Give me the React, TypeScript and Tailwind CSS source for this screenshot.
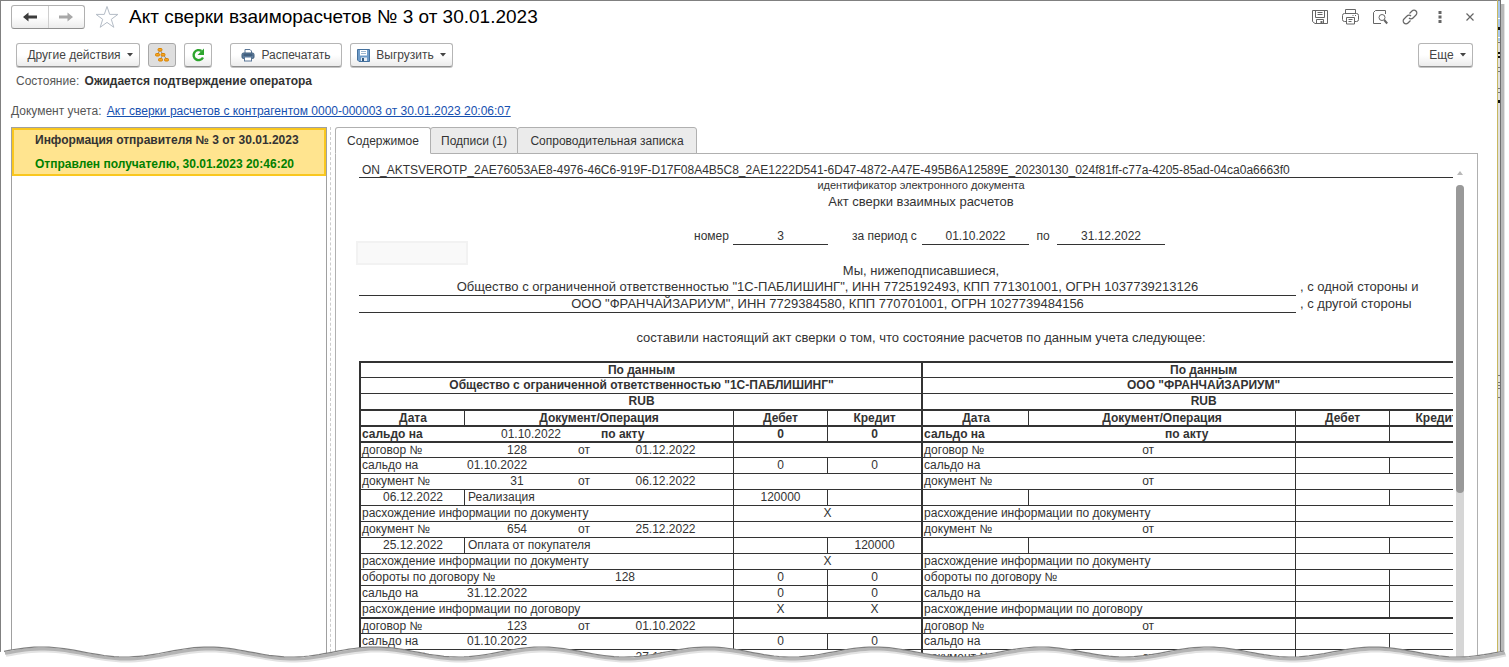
import React from 'react';
import { clsx } from 'clsx';

type Cell = {
  text?: string;
  span?: number;
  align?: 'left' | 'center';
  bold?: boolean;
  line?: boolean; // vertical rule on the left
};

type RowData = { thick?: boolean; left: Cell[]; right: Cell[] };

const DIVIDED: Cell[] = [
  { line: true, align: 'center' },
  { line: true, align: 'center' },
];
const MERGED: Cell[] = [{ span: 2, line: true, align: 'center' }];

const amounts = (debit: string, credit: string, bold = false): Cell[] => [
  { text: debit, line: true, align: 'center', bold },
  { text: credit, line: true, align: 'center', bold },
];

const reference = (label: string, num = '', date = ''): Cell[] => [
  { text: label },
  { text: num, span: 2, align: 'center' },
  { text: 'от', align: 'center' },
  { text: date, align: 'center' },
];

const balance = (date = ''): Cell[] => [{ text: 'сальдо на' }, { text: date, span: 4 }];

const operation = (date = '', name = ''): Cell[] => [
  { text: date, align: 'center' },
  { text: name, span: 4, line: true },
];

const headings = (): Cell[] => [
  { text: 'Дата', align: 'center', bold: true },
  { text: 'Документ/Операция', span: 4, align: 'center', bold: true, line: true },
  { text: 'Дебет', align: 'center', bold: true, line: true },
  { text: 'Кредит', align: 'center', bold: true, line: true },
];

const opening = (date = ''): Cell[] => [
  { text: 'сальдо на', bold: true },
  { text: date, span: 3, align: 'center' },
  { text: 'по акту', bold: true },
];

const wide = (text: string): Cell[] => [{ text, span: 7, align: 'center', bold: true }];
const note = (text: string): Cell[] => [{ text, span: 5 }];

const DOC_DIFF = 'расхождение информации по документу';
const CONTRACT_DIFF = 'расхождение информации по договору';
const MERGED_X: Cell[] = [{ text: 'X', span: 2, line: true, align: 'center' }];

const rows: RowData[] = [
  { thick: true, left: wide('По данным'), right: wide('По данным') },
  {
    left: wide('Общество с ограниченной ответственностью "1С-ПАБЛИШИНГ"'),
    right: wide('ООО "ФРАНЧАЙЗАРИУМ"'),
  },
  { left: wide('RUB'), right: wide('RUB') },
  { thick: true, left: headings(), right: headings() },
  {
    thick: true,
    left: [...opening('01.10.2022'), ...amounts('0', '0', true)],
    right: [...opening(), ...DIVIDED],
  },
  {
    thick: true,
    left: [...reference('договор №', '128', '01.12.2022'), ...MERGED],
    right: [...reference('договор №'), ...MERGED],
  },
  { left: [...balance('01.10.2022'), ...amounts('0', '0')], right: [...balance(), ...DIVIDED] },
  {
    left: [...reference('документ №', '31', '06.12.2022'), ...MERGED],
    right: [...reference('документ №'), ...MERGED],
  },
  {
    left: [...operation('06.12.2022', 'Реализация'), ...amounts('120000', '')],
    right: [...operation(), ...DIVIDED],
  },
  { left: [...note(DOC_DIFF), ...MERGED_X], right: [...note(DOC_DIFF), ...MERGED] },
  {
    left: [...reference('документ №', '654', '25.12.2022'), ...MERGED],
    right: [...reference('документ №'), ...MERGED],
  },
  {
    left: [...operation('25.12.2022', 'Оплата от покупателя'), ...amounts('', '120000')],
    right: [...operation(), ...DIVIDED],
  },
  { left: [...note(DOC_DIFF), ...MERGED_X], right: [...note(DOC_DIFF), ...MERGED] },
  {
    left: [
      { text: 'обороты по договору №', span: 2 },
      { text: '128', span: 3, align: 'center' },
      ...amounts('0', '0'),
    ],
    right: [...note('обороты по договору №'), ...DIVIDED],
  },
  { left: [...balance('31.12.2022'), ...amounts('0', '0')], right: [...balance(), ...DIVIDED] },
  {
    left: [...note(CONTRACT_DIFF), ...amounts('X', 'X')],
    right: [...note(CONTRACT_DIFF), ...DIVIDED],
  },
  {
    thick: true,
    left: [...reference('договор №', '123', '01.10.2022'), ...MERGED],
    right: [...reference('договор №'), ...MERGED],
  },
  { left: [...balance('01.10.2022'), ...amounts('0', '0')], right: [...balance(), ...DIVIDED] },
  {
    left: [...reference('документ №', '', '27.12.2022'), ...MERGED],
    right: [...reference('документ №'), ...MERGED],
  },
];

const BUTTON =
  'flex h-6 items-center justify-center rounded-[3px] border border-[#b5b5b5] border-b-[#8f8f8f] bg-linear-to-b from-white from-50% to-[#ececec] text-[#444] shadow-[0_1px_0_#c4c4c4]';

const Caret: React.FC = () => (
  <svg width="6" height="4" viewBox="0 0 6 4" aria-hidden="true">
    <path d="M0 0h6L3 3.5z" fill="#444" />
  </svg>
);

const Arrow: React.FC<{ color: string; flip?: boolean }> = ({ color, flip }) => (
  <svg width="16" height="12" viewBox="0 0 16 12" className={clsx(flip && 'rotate-180')} aria-hidden="true">
    <path d="M1 6 6.500 1.500v3H15v3H6.500v3z" fill={color} />
  </svg>
);

const Star: React.FC = () => (
  <svg width="24" height="24" viewBox="0 0 24 24" aria-hidden="true">
    <path
      d="m12 1.5 2.7 7.9h8.2l-6.6 4.9 2.5 8-6.8-4.9-6.8 4.9 2.5-8-6.6-4.9h8.2z"
      fill="#fff"
      stroke="#b4bcc6"
    />
  </svg>
);

const TreeIcon: React.FC = () => (
  <svg width="16" height="16" viewBox="0 0 16 16" aria-hidden="true">
    <path d="M6 3 3.5 7.5M6 3l3 4.500M9 7.500 6.500 12M9 7.500l3.500 4.500" stroke="#8b8b8b" fill="none" />
    <g fill="#f5a623" stroke="#d98200">
      <rect x="4" y="1.500" width="4" height="2.500" rx="1" />
      <rect x="1.500" y="6.500" width="4" height="2.500" rx="1" />
      <rect x="7" y="6.500" width="4" height="2.500" rx="1" />
      <rect x="4.500" y="11.500" width="4" height="2.500" rx="1" />
      <rect x="10.500" y="11.500" width="4" height="2.500" rx="1" />
    </g>
  </svg>
);

const RefreshIcon: React.FC = () => (
  <svg width="16" height="16" viewBox="0 0 16 16" aria-hidden="true">
    <path d="M11.500 4A5 5 0 1 0 13 10.500" fill="none" stroke="#2da52d" strokeWidth="2.400" />
    <path d="M14 1.500V8H7.500z" fill="#2da52d" />
  </svg>
);

const PrinterIcon: React.FC = () => (
  <svg width="14" height="14" viewBox="0 0 14 14" aria-hidden="true">
    <path d="M4 5V1.500h5L10.500 3v2" fill="#fff" stroke="#5b7797" />
    <rect x="1" y="5" width="12" height="5.500" rx="1.500" fill="#5f7f9f" stroke="#3f5c7b" />
    <path d="M2.500 7h9" stroke="#26405c" />
    <rect x="3.500" y="9" width="7" height="4" fill="#fff" stroke="#5b7797" />
  </svg>
);

const DisketteIcon: React.FC = () => (
  <svg width="13" height="13" viewBox="0 0 13 13" aria-hidden="true">
    <path d="M.5.5h12v12H2L.5 11z" fill="#6f9cc9" stroke="#44719e" />
    <path d="M3 1h7v5.500H3z" fill="#fff" />
    <path d="M4 2.500h5M4 4.500h5" stroke="#9bb5ce" />
    <path d="M4 8.500h6V12H4z" fill="#e8eef5" />
    <path d="M5 9h2v3H5z" fill="#33597f" />
  </svg>
);

const SaveIcon: React.FC = () => (
  <svg width="16" height="16" viewBox="0 0 16 16" fill="none" stroke="#666" aria-hidden="true">
    <path d="M.5 1.500h15v13H3l-2.500-2zM3.500 1.500v7h9v-7M5.500 3.500h5M5.500 5.500h5M4.500 14.500v-4h7v4" />
    <path d="M8.500 12h2v2h-2z" fill="#666" stroke="none" />
  </svg>
);

const PrintIcon: React.FC = () => (
  <svg width="17" height="16" viewBox="0 0 17 16" fill="none" stroke="#666" aria-hidden="true">
    <path d="M3.500 4.500v-4h10v4M4.500 12.500h-2a2 2 0 0 1-2-2v-4a2 2 0 0 1 2-2h12a2 2 0 0 1 2 2v4a2 2 0 0 1-2 2h-2" />
    <path d="M4.500 8.500h8v6.500h-8zM6.500 10.500h4M6.500 12.500h3M10.500 6.500h1M13 6.500h1" />
  </svg>
);

const PreviewIcon: React.FC = () => (
  <svg width="16" height="16" viewBox="0 0 16 16" fill="none" stroke="#666" aria-hidden="true">
    <path d="M13.500 5V1.500h-10l-2 2v11H9" />
    <circle cx="10" cy="8.500" r="3" />
    <path d="m12.200 11 3 3.500" strokeWidth="2" />
  </svg>
);

const LinkIcon: React.FC = () => (
  <svg width="16" height="16" viewBox="0 0 16 16" fill="none" stroke="#666" strokeWidth="1.200" aria-hidden="true">
    <path d="M7.500 4.500 10 2a2.600 2.600 0 0 1 4 4l-3 3a2.600 2.600 0 0 1-4 0" />
    <path d="M8.500 11.500 6 14a2.600 2.600 0 0 1-4-4l3-3a2.600 2.600 0 0 1 4 0" />
  </svg>
);

const DotsIcon: React.FC = () => (
  <svg width="4" height="12" viewBox="0 0 4 12" fill="#666" aria-hidden="true">
    <path d="M.5 0h3v3h-3zM.5 4.500h3v3h-3zM.5 9h3v3h-3z" />
  </svg>
);

const CloseIcon: React.FC = () => (
  <svg width="8" height="8" viewBox="0 0 8 8" stroke="#666" strokeWidth="1.200" aria-hidden="true">
    <path d="m.5.5 7 7M7.500.5l-7 7" />
  </svg>
);

const TitleBar: React.FC = () => (
  <header className="flex h-8 items-center pr-3 pl-2.5">
    <div className="flex h-6 w-[74px] overflow-hidden rounded-[3px] border border-[#b0b0b0] border-b-[#8f8f8f] bg-linear-to-b from-white from-50% to-[#ececec]">
      <button type="button" aria-label="Назад" className="flex flex-1 items-center justify-center border-r border-[#cfcfcf]">
        <Arrow color="#3c3c3c" />
      </button>
      <button type="button" aria-label="Вперед" className="flex flex-1 items-center justify-center">
        <Arrow color="#a8a8a8" flip />
      </button>
    </div>
    <button type="button" aria-label="В избранное" className="ml-2.5">
      <Star />
    </button>
    <h1 className="ml-2.5 text-[19px] whitespace-nowrap text-black">Акт сверки взаиморасчетов № 3 от 30.01.2023</h1>
    <div className="ml-auto flex items-center">
      <button type="button" aria-label="Сохранить" className="flex w-[30px] justify-center"><SaveIcon /></button>
      <button type="button" aria-label="Печать" className="flex w-[30px] justify-center"><PrintIcon /></button>
      <button type="button" aria-label="Просмотр" className="flex w-[30px] justify-center"><PreviewIcon /></button>
      <button type="button" aria-label="Получить ссылку" className="flex w-[30px] justify-center"><LinkIcon /></button>
      <button type="button" aria-label="Дополнительно" className="flex w-[30px] justify-center"><DotsIcon /></button>
      <button type="button" aria-label="Закрыть" className="flex w-[30px] justify-center"><CloseIcon /></button>
    </div>
  </header>
);

const Toolbar: React.FC = () => (
  <div className="mt-2.5 flex items-center pr-6 pl-[15px]">
    <button type="button" className={clsx(BUTTON, 'w-[124px] gap-1.5 pl-1')}>
      Другие действия <Caret />
    </button>
    <button
      type="button"
      aria-label="Структура"
      className="ml-2 flex h-6 w-7 items-center justify-center rounded-[3px] border border-[#a8a8a8] bg-[#dedede]"
    >
      <TreeIcon />
    </button>
    <button type="button" aria-label="Обновить" className={clsx(BUTTON, 'ml-2 w-7')}>
      <RefreshIcon />
    </button>
    <button type="button" className={clsx(BUTTON, 'ml-[18px] w-28 gap-1.5')}>
      <PrinterIcon /> Распечатать
    </button>
    <button type="button" className={clsx(BUTTON, 'ml-2 w-[103px] gap-1.5')}>
      <DisketteIcon /> Выгрузить <Caret />
    </button>
    <button type="button" className={clsx(BUTTON, 'ml-auto w-[55px] gap-1.5 pl-1')}>
      Еще <Caret />
    </button>
  </div>
);

const tabs = [
  { title: 'Содержимое', width: 'w-24' },
  { title: 'Подписи (1)', width: 'w-[88px]' },
  { title: 'Сопроводительная записка', width: 'w-[180px]' },
];

const Tabs: React.FC = () => (
  <div role="tablist" className="flex h-[26px]">
    {tabs.map((tab, i) => (
      <button
        key={tab.title}
        type="button"
        role="tab"
        aria-selected={i === 0}
        className={clsx(
          'relative -mb-px rounded-t-[3px] border border-[#b0b0b0] text-center whitespace-nowrap',
          tab.width,
          i === 0 ? 'z-10 border-b-white bg-white' : '-ml-px bg-[#ebebeb]',
        )}
      >
        {tab.title}
      </button>
    ))}
  </div>
);

const Half: React.FC<{ cells: Cell[]; thick?: boolean }> = ({ cells, thick }) => (
  <>
    {cells.map((cell, i) => (
      <td
        key={i}
        colSpan={cell.span ?? 1}
        className={clsx(
          'h-4 overflow-visible p-0 whitespace-nowrap border-[#333]',
          thick ? 'border-t-2 leading-[14px]' : 'border-t leading-[15px]',
          i === 0 && 'border-l-2 pl-px',
          cell.line && 'border-l',
          cell.align === 'center' ? 'text-center' : i > 0 && 'pl-[3px]',
          cell.bold && 'font-bold',
        )}
      >
        {cell.text}
      </td>
    ))}
  </>
);

const ActTable: React.FC = () => (
  <table className="w-[1124px] table-fixed border-separate border-spacing-0">
    <colgroup>
      <col className="w-[105px]" />
      <col className="w-[53px]" />
      <col className="w-[53px]" />
      <col className="w-7" />
      <col className="w-[135px]" />
      <col className="w-[94px]" />
      <col className="w-[94px]" />
      <col className="w-[107px]" />
      <col className="w-[53px]" />
      <col className="w-[53px]" />
      <col className="w-7" />
      <col className="w-[133px]" />
      <col className="w-[94px]" />
      <col className="w-[94px]" />
    </colgroup>
    <tbody>
      {rows.map((row, i) => (
        <tr key={i}>
          <Half cells={row.left} thick={row.thick} />
          <Half cells={row.right} thick={row.thick} />
        </tr>
      ))}
    </tbody>
  </table>
);

const UNDERLINE = 'border-b border-[#333] text-center';

const ActDocument: React.FC = () => (
  <div className="min-w-0 flex-1 overflow-hidden whitespace-nowrap">
    <div className="ml-[3px] h-6 border-b border-[#333] pl-[3px] leading-8">
      ON_AKTSVEROTP_2AE76053AE8-4976-46C6-919F-D17F08A4B5C8_2AE1222D541-6D47-4872-A47E-495B6A12589E_20230130_024f81ff-c77a-4205-85ad-04ca0a6663f0
    </div>
    <div className="ml-[3px] w-[1124px] text-center text-[11px] leading-[14px]">идентификатор электронного документа</div>
    <div className="ml-[3px] w-[1124px] text-center text-[13px] leading-5">Акт сверки взаимных расчетов</div>
    <div className="mt-4 flex h-[17px] pl-[338px]">
      <span className="w-[39px]">номер</span>
      <span className={clsx(UNDERLINE, 'w-[95px]')}>3</span>
      <span className="ml-6 w-[70px]">за период с</span>
      <span className={clsx(UNDERLINE, 'w-[107px]')}>01.10.2022</span>
      <span className="w-7 text-center">по</span>
      <span className={clsx(UNDERLINE, 'w-[108px]')}>31.12.2022</span>
    </div>
    <div className="-mt-1 h-6 w-28 border-2 border-[#f2f2f2] bg-[#f9f9f9]" />
    <div className="ml-[3px] text-[13px] leading-4">
      <div className="-mt-0.5 w-[1124px] text-center">Мы, нижеподписавшиеся,</div>
      <div className="flex h-[17px]">
        <span className={clsx(UNDERLINE, 'w-[937px]')}>
          Общество с ограниченной ответственностью "1С-ПАБЛИШИНГ", ИНН 7725192493, КПП 771301001, ОГРН 1037739213126
        </span>
        <span className="ml-1">, с одной стороны и</span>
      </div>
      <div className="flex h-[17px]">
        <span className={clsx(UNDERLINE, 'w-[937px]')}>
          ООО "ФРАНЧАЙЗАРИУМ", ИНН 7729384580, КПП 770701001, ОГРН 1027739484156
        </span>
        <span className="ml-1">, с другой стороны</span>
      </div>
      <div className="mt-4 w-[1124px] text-center leading-[18px]">
        составили настоящий акт сверки о том, что состояние расчетов по данным учета следующее:
      </div>
    </div>
    <div className="mt-3.5 ml-[3px]">
      <ActTable />
    </div>
  </div>
);

const ScrollBar: React.FC = () => (
  <div className="ml-[3px] flex w-2 flex-col items-center pt-[17px]">
    <svg width="6" height="4" viewBox="0 0 6 4" aria-hidden="true">
      <path d="M3 0 6 4H0z" fill="#b8b8b8" />
    </svg>
    <div className="mt-2.5 w-2 flex-1 rounded-t bg-[#d6d6d6]">
      <div className="h-[64%] rounded bg-[#999]" />
    </div>
  </div>
);

// Sliver of the parent window showing past the right edge
const BackWindow: React.FC = () => (
  <svg width="2" height="400" viewBox="0 0 2 400" className="shrink-0" aria-hidden="true">
    <path d="M0 0h2v400H0z" fill="#e0e0e0" />
    <path d="M0 0h2v40H0z" fill="#a9c7ea" />
    <path d="M0 17h2v1H0zM0 36h2v1H0z" fill="#fff" />
    <path d="M0 26h2v3H0zM0 51h2v2H0zM0 55h2v2H0zM0 99h2v3H0z" fill="#111" />
    <path d="M0 41h2v1H0zM0 66h2v1H0zM0 70h2v1H0zM0 87h2v1H0zM0 91h2v1H0zM0 374h2v1H0zM0 381h2v1H0zM0 384h2v1H0zM0 387h2v1H0zM0 396h2v1H0z" fill="#777" />
  </svg>
);

// Torn lower edge: the sheet ends in a wave with a soft shadow under it
const wave = Array.from({ length: 301 }, (_, i) => {
  const x = 4 + i * 5;
  const y = 12 - 5 * Math.cos(((x - 42) / 166.5) * 2 * Math.PI);
  return `${x} ${y.toFixed(1)}`;
}).join('L');

const TornEdge: React.FC = () => (
  <svg
    className="absolute bottom-0 left-0 h-[27px] w-full"
    viewBox="0 0 1509 27"
    preserveAspectRatio="none"
    aria-hidden="true"
  >
    <path d={`M0 12L${wave}L1509 12V27H0z`} fill="#fff" />
    <path d={`M${wave}`} fill="none" stroke="#e2e2e2" strokeWidth="3" transform="translate(2 4)" />
    <path d={`M${wave}`} fill="none" stroke="#b4b4b4" strokeWidth="3" transform="translate(1 2)" />
    <path d={`M${wave}`} fill="none" stroke="#808080" strokeWidth="1.200" />
  </svg>
);

const App: React.FC = () => (
  <div className="relative flex h-screen overflow-hidden bg-white pr-1 font-['Liberation_Sans',Arial,sans-serif] text-[12px] leading-4 text-[#333]">
    <div className="flex min-w-0 flex-1 flex-col border-t border-l border-[#808080]">
      <TitleBar />
      <Toolbar />
      <p className="mt-1 pl-[15px] leading-5">
        <span className="text-[#555]">Состояние:</span> <b className="ml-0.5">Ожидается подтверждение оператора</b>
      </p>
      <p className="mt-2.5 pl-2.5 leading-5">
        <span className="text-[#555]">Документ учета:</span>{' '}
        <a href="#document" className="ml-0.5 text-[#1650b0] underline">
          Акт сверки расчетов с контрагентом 0000-000003 от 30.01.2023 20:06:07
        </a>
      </p>
      <div className="mt-1.5 flex min-h-0 flex-1 pr-[19px] pl-2.5">
        <aside className="w-[316px] shrink-0 border border-[#a0a0a0]">
          <div className="h-12 border-2 border-[#f9c71f] bg-[#ffe48f] pl-[21px] font-bold leading-6">
            <p className="-mt-0.5">Информация отправителя № 3 от 30.01.2023</p>
            <p className="text-[#008000]">Отправлен получателю, 30.01.2023 20:46:20</p>
          </div>
        </aside>
        <div className="mr-1 ml-[3px] border-l border-dashed border-[#ccc]" />
        <main className="flex min-w-0 flex-1 flex-col">
          <Tabs />
          <div className="flex min-h-0 flex-1 border border-[#b0b0b0] pr-[13px] pl-5">
            <ActDocument />
            <ScrollBar />
          </div>
        </main>
      </div>
    </div>
    <div className="flex w-2">
      <div className="w-px bg-[#c8b860]" />
      <div className="w-0.5 border-t border-[#808080] bg-[#e0e0e0]">
        <BackWindow />
      </div>
      <div className="w-px bg-[#707070]" />
      <div className="mt-1 w-[3px] bg-[#b8b8b8]" />
      <div className="mt-1 w-px bg-[#e2e2e2]" />
    </div>
    <TornEdge />
  </div>
);

export default App;
